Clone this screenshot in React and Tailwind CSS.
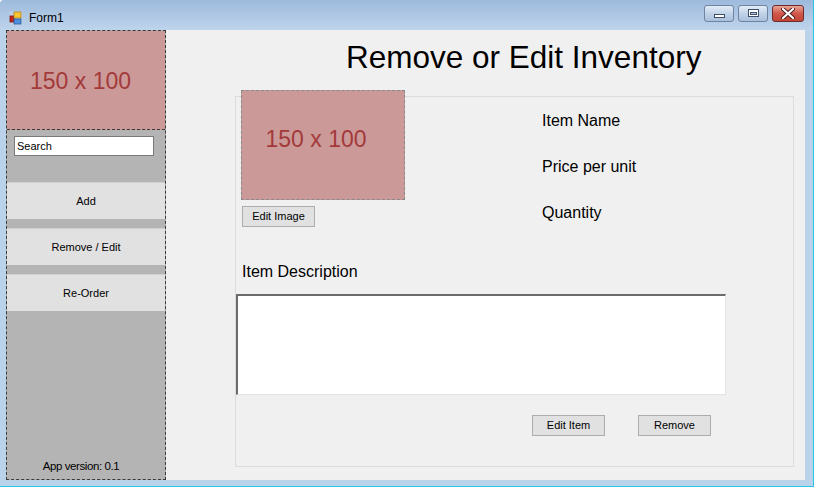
import React from "react";

const font = { fontFamily: '"Liberation Sans", Arial, sans-serif' };

const FormIcon = () => (
  <svg width="14" height="14" viewBox="0 0 14 14" className="shrink-0">
    <rect x="0.5" y="0.5" width="13" height="13" fill="#c9d6e6" opacity="0.6" />
    <rect x="1" y="5" width="4" height="6" fill="#c8241c" stroke="#7a1410" strokeWidth="0.8" />
    <rect x="5" y="1" width="7" height="6" fill="#f7c43a" stroke="#b58410" strokeWidth="0.8" />
    <rect x="5" y="8" width="7" height="5" fill="#4f8fdc" stroke="#2a5aa0" strokeWidth="0.8" />
  </svg>
);

const CaptionButton = ({ children, red, wide }) => (
  <div
    className={`h-[17px] rounded-[3px] border flex items-center justify-center ${
      wide ? "w-[32px]" : "w-[30px]"
    } ${
      red
        ? "border-[#6f2a2a] bg-gradient-to-b from-[#e8a493] via-[#d0574a] to-[#c24634]"
        : "border-[#6f83a3] bg-gradient-to-b from-[#e3ecf7] via-[#c2d3e8] to-[#a9bfdb]"
    }`}
  >
    {children}
  </div>
);

const SideButton = ({ label }) => (
  <div className="h-[37px] bg-[#e1e1e1] border-t border-[#d0d0d0] flex items-center justify-center text-[11px] text-black">
    {label}
  </div>
);

const WinButton = ({ label, className = "" }) => (
  <div
    className={`w-[73px] h-[21px] bg-[#e1e1e1] border border-[#adadad] flex items-center justify-center text-[11px] text-black ${className}`}
  >
    {label}
  </div>
);

export default function App() {
  return (
    <div
      className="w-[814px] h-[487px] bg-[#bbd2eb] border-r border-b border-[#2ac5e6] flex flex-col overflow-hidden rounded-tl-[4px]"
      style={font}
    >
      {/* title bar */}
      <div className="h-[30px] shrink-0 flex items-center bg-gradient-to-b from-[#9dbadc] to-[#bfd4ec] pl-[9px] pr-[9px]">
        <div className="mt-[5px] flex items-center gap-[6px]">
          <FormIcon />
          <span className="text-[12px] text-black">Form1</span>
        </div>
        <div className="ml-auto flex items-center gap-[4px] -mt-[4px]">
          <CaptionButton>
            <div className="w-[11px] h-[4px] bg-white border border-[#3c4f6b] mt-[5px]" />
          </CaptionButton>
          <CaptionButton>
            <div className="w-[11px] h-[8px] bg-white border border-[#3c4f6b] flex items-center justify-center">
              <div className="w-[7px] h-[3px] bg-[#b8c9de] border border-[#3c4f6b]" />
            </div>
          </CaptionButton>
          <CaptionButton red wide>
            <svg width="14" height="11" viewBox="0 0 14 11">
              <path d="M2 1 L12 10 M12 1 L2 10" stroke="#4a1a1a" strokeWidth="4" strokeLinecap="round" />
              <path d="M2 1 L12 10 M12 1 L2 10" stroke="#ffffff" strokeWidth="2.2" strokeLinecap="round" />
            </svg>
          </CaptionButton>
        </div>
      </div>

      {/* client area */}
      <div className="flex-1 flex pl-[6px] pr-[8px] pb-[6px]">
        <div className="flex-1 flex bg-[#f0f0f0]">
          {/* sidebar */}
          <div className="w-[160px] shrink-0 flex flex-col bg-[#b4b4b4] border border-dashed border-[#3a3a3a]">
            <div className="h-[99px] shrink-0 bg-[#cc9999] border-b border-dashed border-[#3a3a3a] flex items-center justify-center pr-[11px] pt-[2px] text-[23px] text-[#a33a3a]">
              150 x 100
            </div>
            <div className="mt-[6px] ml-[7px] w-[140px] h-[20px] bg-white border border-[#7a7a7a] flex items-center px-[2px] text-[11px] text-black">
              Search
            </div>
            <div className="mt-[26px] flex flex-col gap-[9px]">
              <SideButton label="Add" />
              <SideButton label="Remove / Edit" />
              <SideButton label="Re-Order" />
            </div>
            <div className="mt-auto pb-[6px] pr-[10px] text-center text-[11.5px] leading-[14px] tracking-[-0.4px] text-black">
              App version: 0.1
            </div>
          </div>

          {/* main */}
          <div className="flex-1 flex flex-col">
            <div className="mt-[9px] ml-[180px] text-[31.5px] leading-[36px] text-black whitespace-nowrap">
              Remove or Edit Inventory
            </div>
            <div className="mt-[21px] ml-[69px] w-[559px] h-[371px] border border-[#dcdcdc]">
              <div className="-mt-[7px] flex flex-col">
                <div className="flex">
                  <div className="ml-[5px] w-[164px] flex flex-col">
                    <div className="h-[110px] bg-[#cc9999] border border-dashed border-[#8a8a8a] flex items-center justify-center pr-[14px] pb-[12px] text-[23px] text-[#a33a3a]">
                      150 x 100
                    </div>
                    <WinButton label="Edit Image" className="mt-[6px] ml-[1px]" />
                  </div>
                  <div className="ml-[137px] mt-[22px] flex flex-col gap-[28px] text-[16px] leading-[18px] text-black">
                    <span>Item Name</span>
                    <span>Price per unit</span>
                    <span>Quantity</span>
                  </div>
                </div>
                <div className="mt-[36px] ml-[6px] text-[16px] leading-[18px] text-black">
                  Item Description
                </div>
                <div className="mt-[13px] w-[490px] h-[101px] bg-white border-t-2 border-l-2 border-t-[#6b6b6b] border-l-[#6b6b6b] border-r border-b border-r-[#e3e3e3] border-b-[#e3e3e3]" />
                <div className="mt-[20px] flex">
                  <WinButton label="Edit Item" className="ml-[296px]" />
                  <WinButton label="Remove" className="ml-[33px] h-[20px]" />
                </div>
              </div>
            </div>
          </div>
        </div>
      </div>
    </div>
  );
}
